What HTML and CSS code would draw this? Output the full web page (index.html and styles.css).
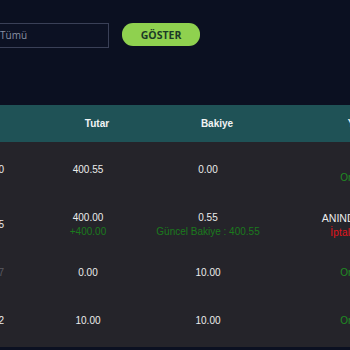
FILE: index.html
```html
<!DOCTYPE html>
<html lang="tr">
<head>
<meta charset="utf-8">
<title>Hesap Hareketleri</title>
<link rel="stylesheet" href="styles.css">
</head>
<body>
<div class="page">
  <div class="filters">
    <div class="select">Tümü</div>
    <button class="show-btn">GÖSTER</button>
  </div>
  <div class="table-wrap">
    <table class="tx">
      <colgroup>
        <col class="c0"><col class="c1"><col class="c2"><col class="c3">
      </colgroup>
      <thead>
        <tr>
          <th class="h-date">Tarih</th>
          <th class="h-num">Tutar</th>
          <th class="h-num">Bakiye</th>
          <th class="h-type">Yöntem</th>
        </tr>
      </thead>
      <tbody>
        <tr class="r-tall">
          <td class="c-date">12:40</td>
          <td>400.55</td>
          <td>0.00</td>
          <td><span class="status-low ok">Onaylandı</span></td>
        </tr>
        <tr>
          <td class="c-date">12:35</td>
          <td>400.00<div class="sub green">+400.00</div></td>
          <td>0.55<div class="sub green">Güncel Bakiye : 400.55</div></td>
          <td><span class="method">ANINDA HAVALE</span><div class="sub red cancel">İptal Edilmiştir</div></td>
        </tr>
        <tr>
          <td class="c-date dim">11:17</td>
          <td>0.00</td>
          <td>10.00</td>
          <td class="ok">Onaylandı</td>
        </tr>
        <tr>
          <td class="c-date">10:52</td>
          <td>10.00</td>
          <td>10.00</td>
          <td class="ok">Onaylandı</td>
        </tr>
      </tbody>
    </table>
  </div>
</div>
</body>
</html>
```
FILE: styles.css
```css
html, body {
  margin: 0;
  padding: 0;
  background: #0b1021;
  overflow: hidden;
}
.page {
  width: 350px;
  height: 350px;
  overflow: hidden;
  font-family: "Liberation Sans", Arial, sans-serif;
}
.filters {
  display: flex;
  align-items: flex-start;
  gap: 13px;
  height: 105px;
  box-sizing: border-box;
  padding-top: 23px;
  margin-left: -12px;
}
.select {
  width: 121px;
  height: 25px;
  box-sizing: border-box;
  border: 1px solid #3a4057;
  background: #0c1123;
  color: #8a90a3;
  font-family: "Open Sans", sans-serif;
  font-size: 10px;
  line-height: 23px;
  padding-left: 11px;
  flex-shrink: 0;
}
.show-btn {
  width: 78px;
  height: 23px;
  border: none;
  border-radius: 11px;
  background: #8fd14f;
  color: #1c3a27;
  font-family: "Open Sans", sans-serif;
  font-weight: 700;
  font-size: 10.5px;
  padding: 0;
  flex-shrink: 0;
}
.table-wrap {
  margin-left: -32px;
  background: #25242a;
  padding-bottom: 2px;
  width: 490px;
}
.tx {
  border-collapse: collapse;
  table-layout: fixed;
  width: 490px;
  color: #ececec;
  font-size: 10px;
  line-height: 14px;
}
.c0 { width: 60px; }
.c1 { width: 120px; }
.c2 { width: 120px; }
.c3 { width: 190px; }
.tx thead tr {
  background: #1f5256;
  height: 37px;
}
.tx th {
  font-weight: 700;
  color: #f2f4f4;
  text-align: center;
  padding: 0;
}
.tx th.h-date {
  text-align: right;
  padding-right: 34px;
}
.tx th.h-num { padding-left: 18px; }
.tx th.h-type { padding-left: 6px; }
.tx tbody tr { height: 48px; }
.tx tbody tr.r-tall { height: 59px; }
.tx td {
  text-align: center;
  vertical-align: middle;
  padding: 0;
}
.tx tr.r-tall td { padding-bottom: 3px; }
.tx td.c-date {
  text-align: right;
  padding-right: 24px;
}
.method { font-size: 10.6px; }
.cancel { letter-spacing: 0.2px; }
.dim { color: #5a5960; }
.status-low {
  display: inline-block;
  padding-top: 16px;
}
.ok { color: #1f8c22; }
.green { color: #1b7a1d; }
.red { color: #e3141b; }
.sub { line-height: 14px; }
```
